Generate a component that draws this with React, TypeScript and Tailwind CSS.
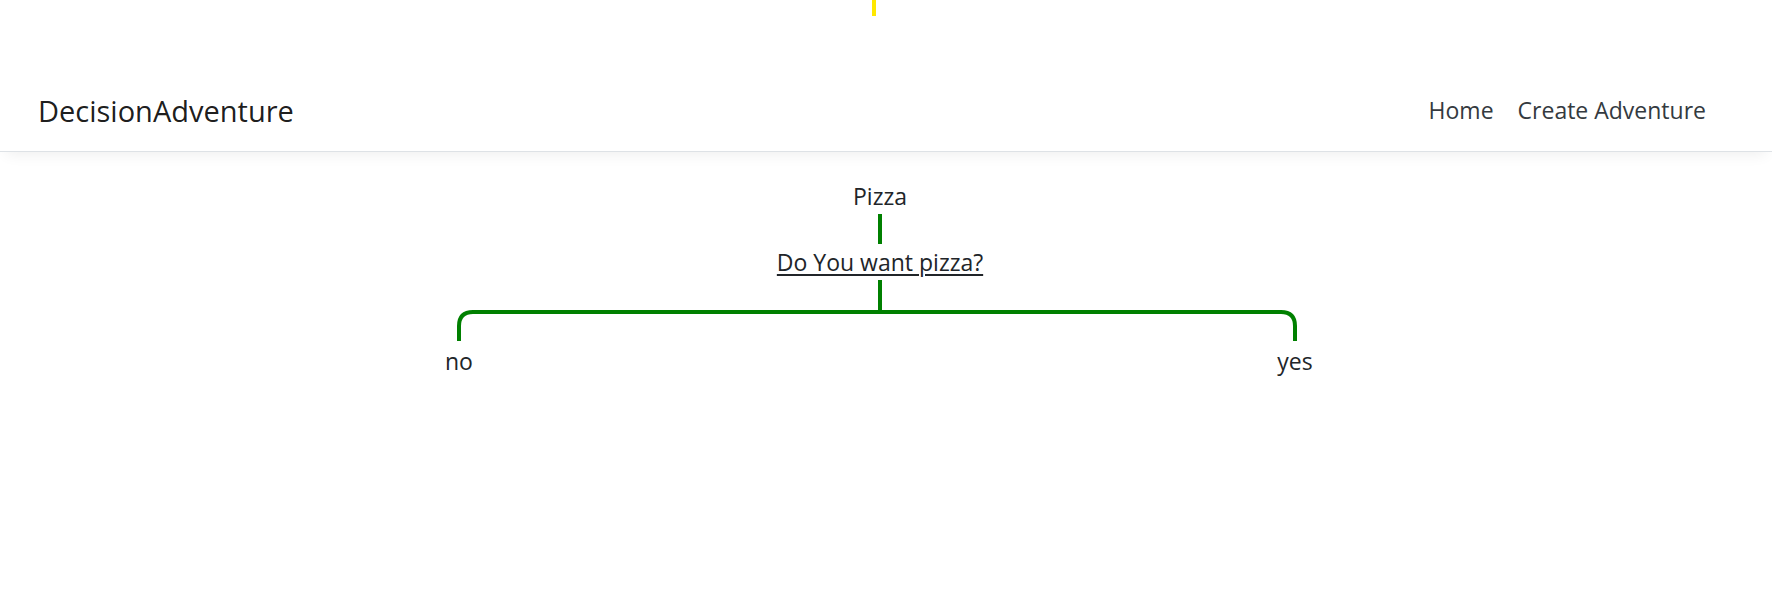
const font = { fontFamily: '"Segoe UI", "Open Sans", "Noto Sans", sans-serif' };

function Navbar() {
  return (
    <header>
      {/* odd little marker above the nav */}
      <div className="h-[68px]">
        <div className="ml-[872px] w-[4px] h-[16px] bg-[#ffe800]" />
      </div>
      <nav className="h-[84px] bg-white border-b border-[#dee2e6] shadow-[0_8px_14px_-6px_rgba(0,0,0,0.07)] flex items-center justify-between pl-[38px] pr-[54px]">
        <a className="mt-[2px] text-[29px] leading-[44px] text-black/90">DecisionAdventure</a>
        <ul className="flex items-center mt-[1px]">
          <li>
            <a className="block px-[12px] text-[23px] leading-[36px] text-[#343a40]">Home</a>
          </li>
          <li>
            <a className="block px-[12px] text-[23px] leading-[36px] text-[#343a40]">Create Adventure</a>
          </li>
        </ul>
      </nav>
    </header>
  );
}

function Tree() {
  return (
    <div className="ml-[440px] w-[880px] mt-[26px] flex flex-col items-center text-[23px] leading-[36px] text-[#212529]">
      <div>Pizza</div>
      <div className="w-[4px] h-[30px] bg-[#008000]" />
      <a className="underline underline-offset-[3px] decoration-[1.5px]">Do You want pizza?</a>
      <svg width="880" height="61" viewBox="0 0 880 61" className="block">
        <path d="M440 0 V32" stroke="#008000" strokeWidth="4" fill="none" />
        <path
          d="M19 61 V46 Q19 32 33 32 H841 Q855 32 855 46 V61"
          stroke="#008000"
          strokeWidth="4"
          fill="none"
        />
      </svg>
      <div className="w-full flex justify-between mt-[2px]">
        <div className="w-[38px] text-center">no</div>
        <div className="w-[50px] text-center">yes</div>
      </div>
    </div>
  );
}

export default function App() {
  return (
    <div className="w-[1772px] h-[615px] bg-white overflow-hidden" style={font}>
      <Navbar />
      <Tree />
    </div>
  );
}
